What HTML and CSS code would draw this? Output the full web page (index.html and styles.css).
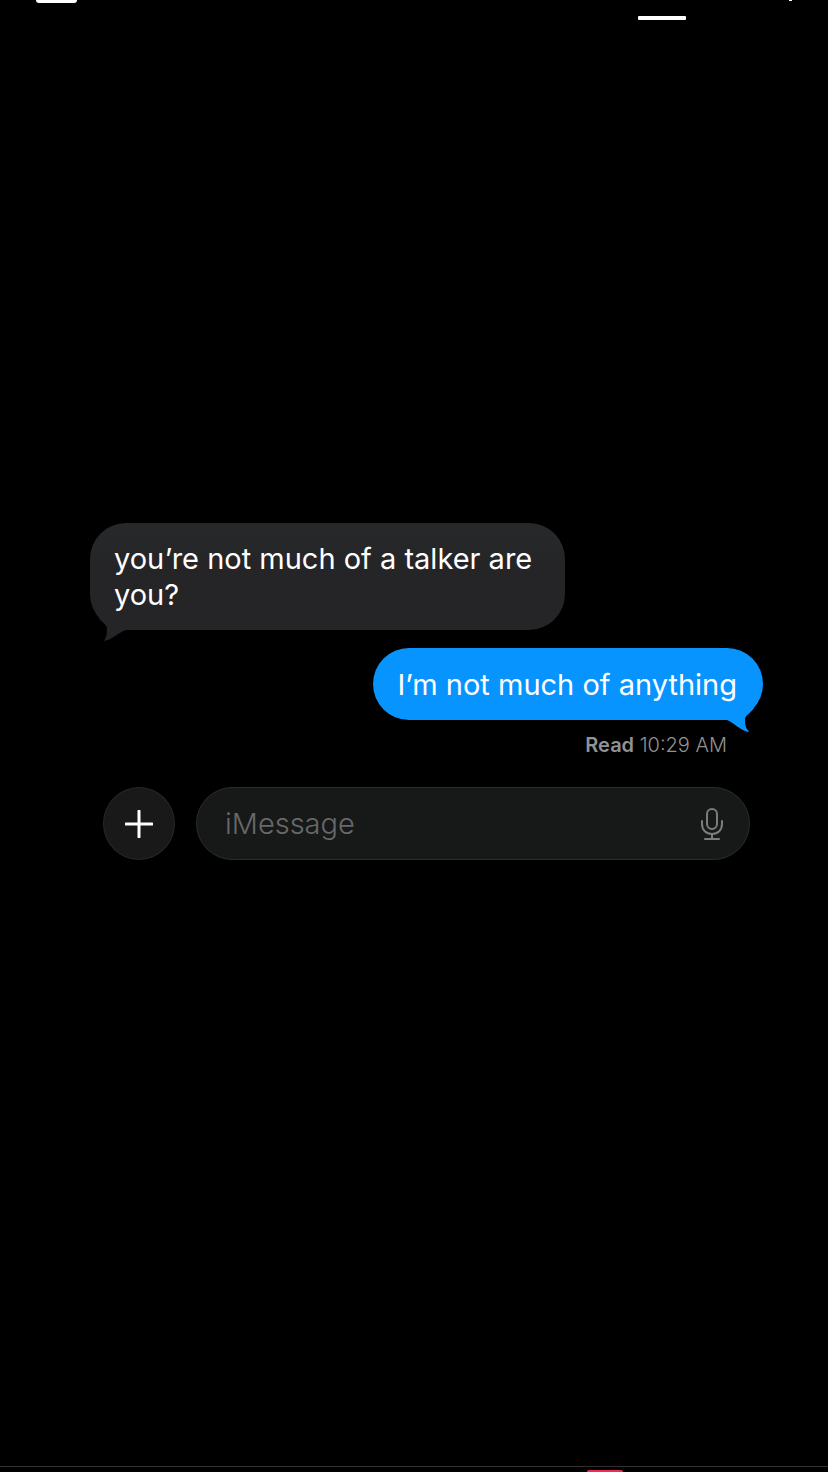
FILE: index.html
```
<!DOCTYPE html>
<html lang="en">
    <head>
        <meta charset="utf-8">
        <title>Messages</title>
        <meta name="viewport" content="width=device-width, initial-scale=1">
        <link rel="stylesheet" href="styles.css">
    </head>

    <body>
        <header class="topbar">
            <span class="topbar-badge"></span>
            <span class="topbar-underline"></span>
            <span class="topbar-dot"></span>
        </header>

        <main class="chat">
            <div class="bubble bubble-in">
                you’re not much of a talker are you?
                <svg class="tail" width="38" height="24" viewBox="0 0 38 24" aria-hidden="true">
                    <path d="M9 0 C12 5 17 6 17 11 C17 16 16 20 14 23 C22 22 29 14 36 12 L36 0 Z"/>
                </svg>
            </div>

            <div class="bubble bubble-out">
                I’m not much of anything
                <svg class="tail" width="38" height="24" viewBox="0 0 38 24" aria-hidden="true">
                    <path d="M28 0 C24 6 19 7 19 12 C19 17 20 21 23 23 L22 24 C14 22 8 15 1 12 L1 0 Z"/>
                </svg>
            </div>

            <div class="receipt"><b>Read</b> 10:29 AM</div>

            <form class="composer">
                <button class="add" type="button" aria-label="Add attachment">
                    <svg width="28" height="28" viewBox="0 0 28 28" aria-hidden="true">
                        <path d="M14 1 V27 M1 14 H27"/>
                    </svg>
                </button>
                <div class="field">
                    <input class="field-input" type="text" placeholder="iMessage" aria-label="iMessage">
                    <button class="mic" type="button" aria-label="Dictate">
                        <svg width="24" height="34" viewBox="0 0 24 34" aria-hidden="true">
                            <rect x="7" y="2" width="10" height="20" rx="5"/>
                            <path d="M2 14 V17 C2 23 6 27 12 27 C18 27 22 23 22 17 V14 M12 27 V32 M5 32 H19"/>
                        </svg>
                    </button>
                </div>
            </form>
        </main>

        <footer class="bottombar">
            <span class="bottombar-badge"></span>
        </footer>
    </body>
</html>
```
FILE: styles.css
```
* {
    box-sizing: border-box;
}

body {
    display: flex;
    flex-direction: column;
    min-height: 100vh;
    margin: 0;
    background: #000;
    color: #fff;
    font-family: Inter, "Liberation Sans", sans-serif;
    font-size: 29px;
    line-height: 36px;
}

.topbar {
    display: flex;
    align-items: flex-start;
    height: 20px;
    padding: 0 36px;
}

.topbar-badge {
    width: 41px;
    height: 3px;
    border-radius: 0 0 4px 4px;
    background: #fff;
}

.topbar-underline {
    align-self: flex-end;
    width: 48px;
    height: 4px;
    margin-left: auto;
    border-radius: 1px;
    background: #fff;
}

.topbar-dot {
    width: 3px;
    height: 1px;
    margin-left: 103px;
    background: #fff;
}

.chat {
    display: flex;
    flex: 1;
    flex-direction: column;
    padding: 503px 65px 0 90px;
}

.bubble {
    position: relative;
    max-width: 475px;
    border-radius: 36px;
}

.bubble-in {
    align-self: flex-start;
    padding: 18px 24px 17px;
    background: linear-gradient(#272929, #252528 40%);
}

.bubble-out {
    align-self: flex-end;
    margin-top: 18px;
    padding: 19px 26px 17px 25px;
    background: #0894ff;
}

.tail {
    position: absolute;
    bottom: -12px;
}

.bubble-in .tail {
    left: 0;
    fill: #252528;
}

.bubble-out .tail {
    right: -1px;
    fill: #0894ff;
}

.receipt {
    align-self: flex-end;
    margin: 13px 36px 0 0;
    color: #929292;
    font-size: 20px;
    font-weight: 300;
    line-height: 24px;
}

.receipt b {
    font-weight: 600;
}

.composer {
    display: flex;
    gap: 21px;
    margin-top: 30px;
    padding: 0 13px;
}

.add {
    display: flex;
    align-items: center;
    justify-content: center;
    width: 72px;
    height: 73px;
    padding: 0;
    border: 1px solid #272727;
    border-radius: 50%;
    background: #191919;
}

.add svg {
    fill: none;
    stroke: #fff;
    stroke-width: 3;
    stroke-linecap: round;
}

.field {
    display: flex;
    flex: 1;
    align-items: center;
    height: 73px;
    padding: 0 25px 0 28px;
    border: 1px solid #2b2d2d;
    border-radius: 37px;
    background: #171919;
}

.field-input {
    flex: 1;
    min-width: 0;
    padding: 0;
    border: 0;
    outline: 0;
    background: none;
    color: #fff;
    font: inherit;
    font-weight: 300;
}

.field-input::placeholder {
    color: #686868;
    opacity: 1;
}

.mic {
    display: flex;
    padding: 0;
    border: 0;
    background: none;
}

.mic svg {
    fill: none;
    stroke: #7b7d7d;
    stroke-width: 2;
    stroke-linecap: round;
}

.bottombar {
    display: flex;
    justify-content: flex-end;
    height: 6px;
    padding: 3px 205px 0 0;
    border-top: 1px solid #303030;
}

.bottombar-badge {
    width: 36px;
    height: 2px;
    border-radius: 18px 18px 0 0;
    background: #f02c56;
}
```
